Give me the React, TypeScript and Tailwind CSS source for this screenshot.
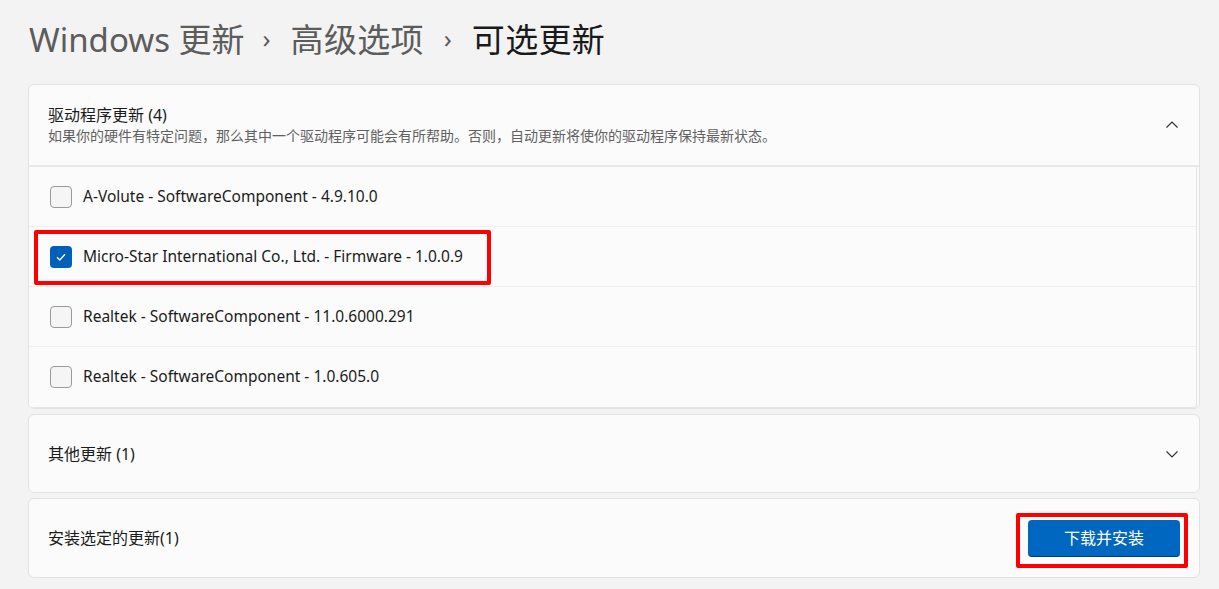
import React from 'react';

const font = { fontFamily: '"Noto Sans", "Noto Sans CJK SC", sans-serif' };

interface DriverRowProps {
  label: string;
  checked?: boolean;
  highlight?: boolean;
  last?: boolean;
}

function ChevronUp() {
  return (
    <svg width="14" height="14" viewBox="0 0 14 14" fill="none">
      <path d="M1.5 9.5 L7 4 L12.5 9.5" stroke="#333" strokeWidth="1.2" />
    </svg>
  );
}

function ChevronDown() {
  return (
    <svg width="14" height="14" viewBox="0 0 14 14" fill="none">
      <path d="M1.5 4.5 L7 10 L12.5 4.5" stroke="#333" strokeWidth="1.2" />
    </svg>
  );
}

function DriverRow({ label, checked = false, highlight = false, last = false }: DriverRowProps) {
  return (
    <div
      className={`relative flex items-center h-[60px] pl-[21px] ${last ? '' : 'border-b border-[#ededed]'}`}
    >
      {checked ? (
        <span className="flex items-center justify-center w-[22px] h-[22px] rounded-[4px] bg-[#005fb8]">
          <svg width="12" height="12" viewBox="0 0 12 12" fill="none">
            <path d="M2 6.3 L4.8 9 L10 3.2" stroke="#fff" strokeWidth="1.3" />
          </svg>
        </span>
      ) : (
        <span className="w-[22px] h-[22px] rounded-[4px] border border-[#9a9a9a] bg-[#f5f5f5]" />
      )}
      <span className="ml-[11px] text-[15.5px] text-[#1b1b1b]">{label}</span>
      {highlight && (
        <div className="absolute left-[5px] top-[3px] w-[457px] h-[55px] border-[4px] border-[#ff0000] rounded-[2px]" />
      )}
    </div>
  );
}

export default function App() {
  return (
    <div className="w-[1219px] h-[589px] bg-[#f3f3f3] overflow-hidden" style={font}>
      <div className="flex items-center h-[84px] pl-[29px] pb-[6px] text-[33px] leading-none">
        <span className="text-[#5c5c5c]">Windows 更新</span>
        <span className="text-[#5c5c5c] text-[26px] ml-[18px] mr-[20px] mb-[2px]">›</span>
        <span className="text-[#5c5c5c] tracking-[0.3px]">高级选项</span>
        <span className="text-[#5c5c5c] text-[26px] ml-[20px] mr-[20px] mb-[2px]">›</span>
        <span className="text-[#1a1a1a] tracking-[0.3px]">可选更新</span>
      </div>

      <div className="ml-[28px] w-[1172px] flex flex-col gap-[5px]">
        <div className="rounded-[6px] border border-[#e2e2e2] bg-[#fbfbfb] overflow-hidden">
          <div className="flex items-center justify-between h-[82px] pl-[19px] pr-[20px] border-b-2 border-[#e8e8e8]">
            <div className="flex flex-col">
              <span className="text-[16px] text-[#1b1b1b] leading-[22px]">驱动程序更新 (4)</span>
              <span className="text-[14px] text-[#616161] leading-[20px]">
                如果你的硬件有特定问题，那么其中一个驱动程序可能会有所帮助。否则，自动更新将使你的驱动程序保持最新状态。
              </span>
            </div>
            <ChevronUp />
          </div>
          <div className="mr-[2px] border-r border-b border-[#e5e5e5] bg-[#fbfbfb] rounded-br-[4px]">
            <DriverRow label="A-Volute - SoftwareComponent - 4.9.10.0" />
            <DriverRow label="Micro-Star International Co., Ltd. - Firmware - 1.0.0.9" checked highlight />
            <DriverRow label="Realtek - SoftwareComponent - 11.0.6000.291" />
            <DriverRow label="Realtek - SoftwareComponent - 1.0.605.0" last />
          </div>
        </div>

        <div className="flex items-center justify-between h-[79px] pl-[19px] pr-[20px] rounded-[6px] border border-[#e2e2e2] bg-[#fbfbfb]">
          <span className="text-[16px] text-[#1b1b1b]">其他更新 (1)</span>
          <ChevronDown />
        </div>

        <div className="flex items-center justify-between h-[80px] pl-[19px] pr-[19px] rounded-[6px] border border-[#e2e2e2] bg-[#fbfbfb]">
          <span className="text-[16px] text-[#1b1b1b]">安装选定的更新(1)</span>
          <div className="relative">
            <button className="w-[152px] h-[37px] rounded-[4px] bg-[#0067c0] border-b border-[#003e73] text-white text-[16px]">
              下载并安装
            </button>
            <div className="absolute -left-[12px] -top-[7px] w-[172px] h-[55px] border-[4px] border-[#ff0000] rounded-[2px]" />
          </div>
        </div>
      </div>
    </div>
  );
}
